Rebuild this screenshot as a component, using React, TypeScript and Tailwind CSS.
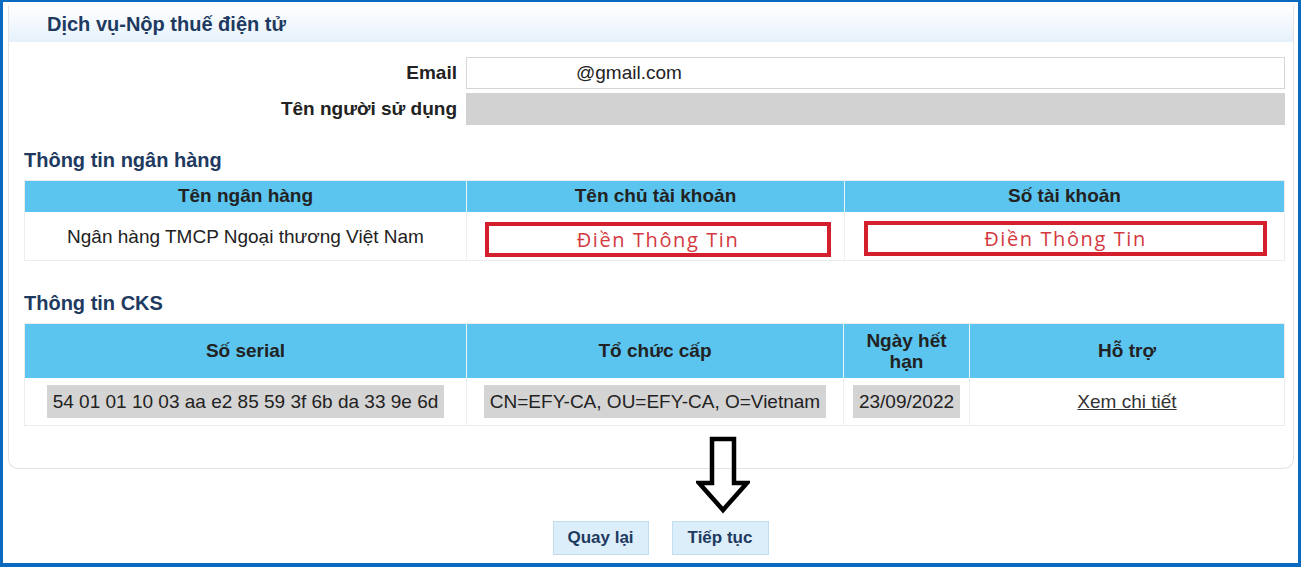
import React from "react";

const font = { fontFamily: '"Liberation Sans", Arial, sans-serif' };

function RedField() {
  return (
    <div className="flex h-[35px] items-center justify-center border-4 border-[#d3202c] bg-white text-[20px] tracking-[1.6px] text-[#d33a3f]" style={{ fontFamily: '"Open Sans", "Noto Sans", sans-serif' }}>
      Điền Thông Tin
    </div>
  );
}

function GrayValue({ children }: { children: React.ReactNode }) {
  return <span className="inline-block bg-[#d4d4d4] px-[6px] py-[5px] leading-[23px]">{children}</span>;
}

export default function App() {
  return (
    <div className="h-[567px] w-[1301px] overflow-hidden border-t-2 border-r-[3px] border-b-[4px] border-l-[3px] border-[#0a6ac0] bg-white text-[#222]" style={font}>
      <div className="ml-[5px] mr-[4px] mt-[3px] rounded-b-[10px] border border-t-0 border-[#e3e3e3] pb-[42px]">
        {/* panel header */}
        <div className="flex h-[37px] items-center bg-gradient-to-b from-white to-[#e6f1fc] pl-[38px] text-[20px] font-bold text-[#1e3a60]">
          Dịch vụ-Nộp thuế điện tử
        </div>

        {/* account fields */}
        <div className="mt-[15px] flex flex-col gap-[4px] pr-[8px]">
          <div className="flex items-center gap-[9px]">
            <div className="w-[448px] text-right text-[19px] font-bold">Email</div>
            <div className="flex h-[32px] flex-1 items-center border border-[#d6d6d6] pl-[109px] text-[19px]">@gmail.com</div>
          </div>
          <div className="flex items-center gap-[9px]">
            <div className="w-[448px] text-right text-[19px] font-bold">Tên người sử dụng</div>
            <div className="h-[32px] flex-1 bg-[#d2d2d2]" />
          </div>
        </div>

        {/* bank */}
        <div className="ml-[15px] mr-[8px] mt-[23px]">
          <div className="text-[20px] font-bold leading-[24px] text-[#1e3a60]">Thông tin ngân hàng</div>
          <div className="mt-[8px] border border-[#ececec]">
            <div className="grid grid-cols-[441px_377px_1fr] gap-px bg-[#e9f6fc] text-[19px] font-bold">
              <div className="flex h-[31px] items-center justify-center bg-[#5bc5ef]">Tên ngân hàng</div>
              <div className="flex h-[31px] items-center justify-center bg-[#5bc5ef]">Tên chủ tài khoản</div>
              <div className="flex h-[31px] items-center justify-center bg-[#5bc5ef]">Số tài khoản</div>
            </div>
            <div className="grid h-[48px] grid-cols-[441px_377px_1fr] gap-px bg-[#efefef] text-[19px]">
              <div className="flex items-center justify-center bg-white pt-[2px]">Ngân hàng TMCP Ngoại thương Việt Nam</div>
              <div className="bg-white pl-[18px] pr-[13px] pt-[10px]"><RedField /></div>
              <div className="bg-white pl-[19px] pr-[17px] pt-[9px]"><RedField /></div>
            </div>
          </div>
        </div>

        {/* signature */}
        <div className="ml-[15px] mr-[8px] mt-[30px]">
          <div className="text-[20px] font-bold leading-[24px] text-[#1e3a60]">Thông tin CKS</div>
          <div className="mt-[8px] border border-[#ececec]">
            <div className="grid grid-cols-[441px_376px_125px_1fr] gap-px bg-[#e9f6fc] text-[19px] font-bold">
              <div className="flex h-[54px] items-center justify-center bg-[#5bc5ef]">Số serial</div>
              <div className="flex h-[54px] items-center justify-center bg-[#5bc5ef]">Tổ chức cấp</div>
              <div className="flex h-[54px] items-center justify-center bg-[#5bc5ef] text-center leading-[21px]">Ngày hết<br />hạn</div>
              <div className="flex h-[54px] items-center justify-center bg-[#5bc5ef]">Hỗ trợ</div>
            </div>
            <div className="grid h-[47px] grid-cols-[441px_376px_125px_1fr] gap-px bg-[#efefef] text-[19px]">
              <div className="flex items-center justify-center bg-white"><GrayValue>54 01 01 10 03 aa e2 85 59 3f 6b da 33 9e 6d</GrayValue></div>
              <div className="flex items-center justify-center bg-white"><GrayValue>CN=EFY-CA, OU=EFY-CA, O=Vietnam</GrayValue></div>
              <div className="flex items-center justify-center bg-white"><GrayValue>23/09/2022</GrayValue></div>
              <div className="flex items-center justify-center bg-white pt-[2px]">
                <a className="text-[#333] underline">Xem chi tiết</a>
              </div>
            </div>
          </div>
        </div>
      </div>

      {/* arrow + actions */}
      <div className="flex flex-col items-center">
        <svg width="54" height="78" viewBox="0 0 54 78" className="-mt-[33px] ml-[144px]">
          <path d="M16 3 H38 V47 H51 L27 74 L3 47 H16 Z" fill="none" stroke="#000" strokeWidth="4.5" strokeLinejoin="miter" />
        </svg>
        <div className="ml-[20px] mt-[7px] flex gap-[23px]">
          <button className="h-[34px] w-[96px] border border-[#c2dcf0] bg-[#ddeefb] text-[17px] font-bold text-[#1e3a60]">Quay lại</button>
          <button className="h-[34px] w-[97px] border border-[#c2dcf0] bg-[#ddeefb] text-[17px] font-bold text-[#1e3a60]">Tiếp tục</button>
        </div>
      </div>
    </div>
  );
}
